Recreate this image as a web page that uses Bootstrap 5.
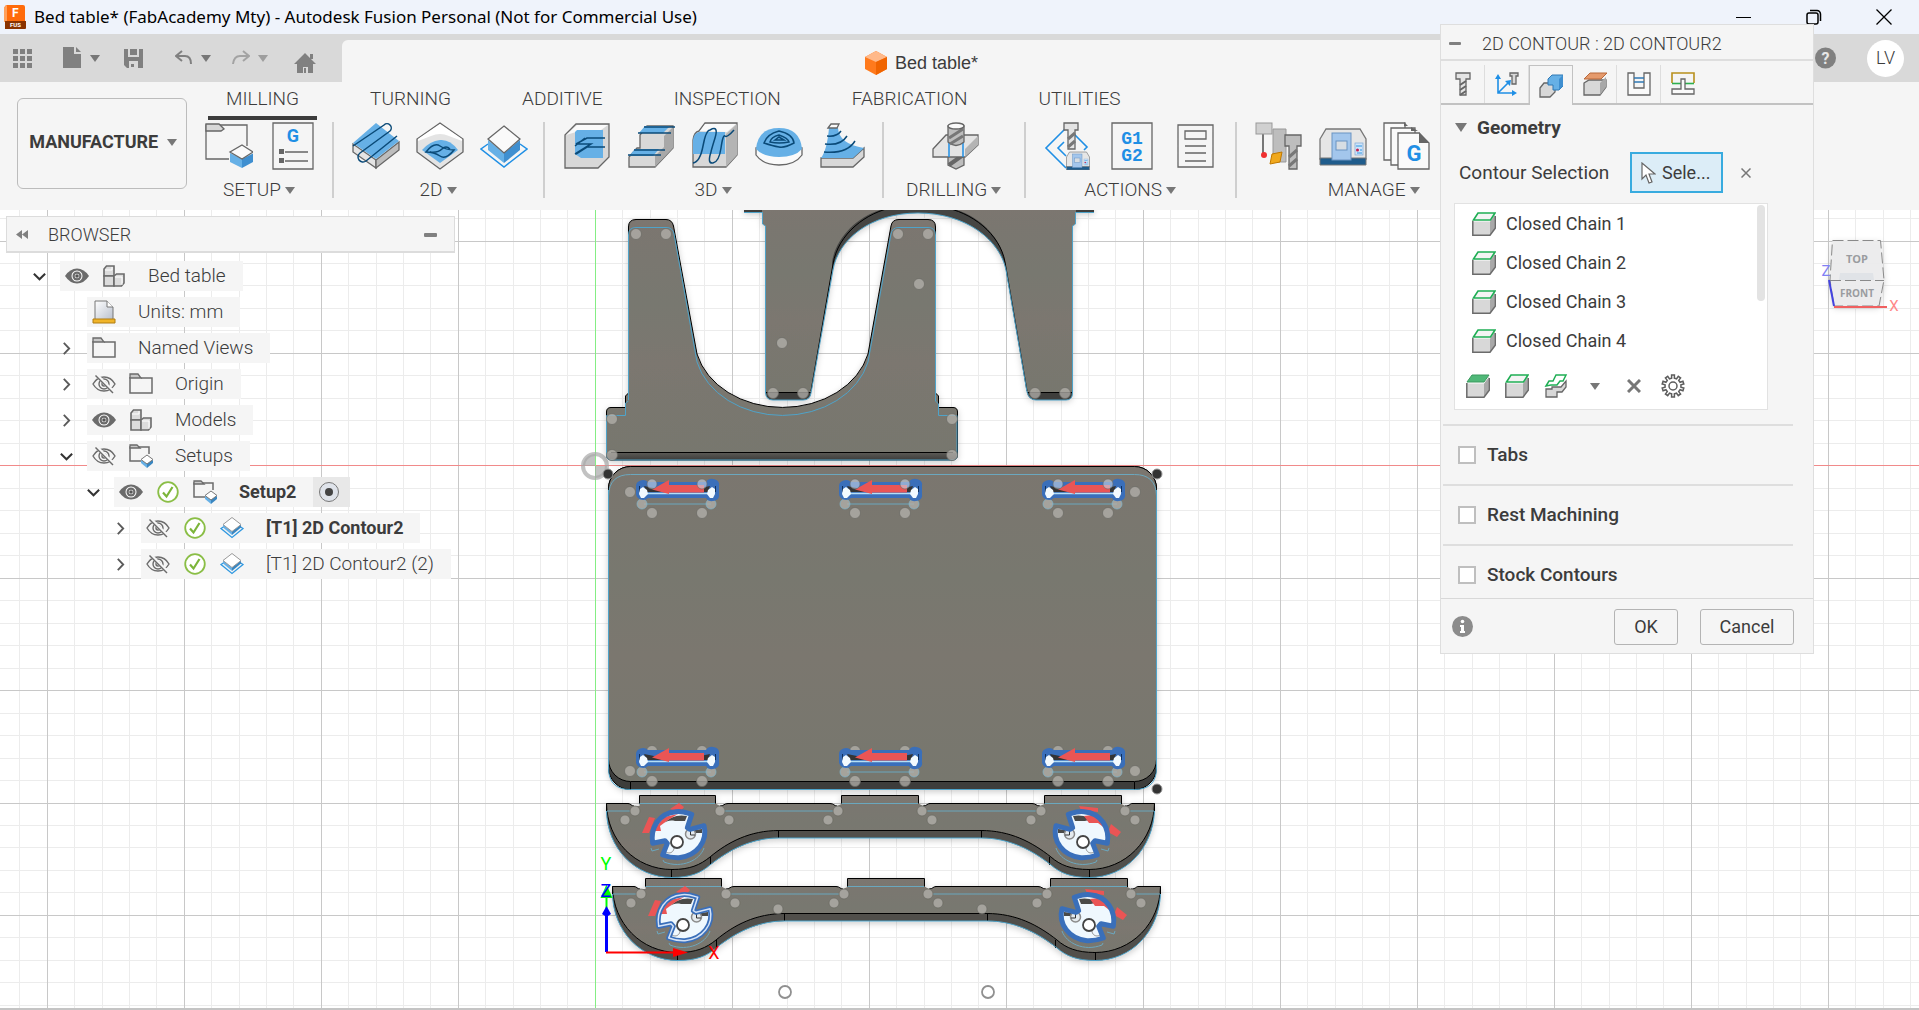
<!DOCTYPE html>
<html lang="en">
<head>
<meta charset="utf-8">
<meta name="viewport" content="width=device-width, initial-scale=1">
<title>Bed table* (FabAcademy Mty) - Autodesk Fusion Personal (Not for Commercial Use)</title>
<link href="https://cdn.jsdelivr.net/npm/bootstrap@5.3.0/dist/css/bootstrap.min.css" rel="stylesheet">
<style>
body{font-family:Roboto,"Liberation Sans",sans-serif;font-size:19px;line-height:24px;color:#3c3c3c;background:#fff}
svg{display:block;flex:none}
button{font:inherit;color:inherit;background:none;border:0;padding:0}
.light{font-weight:300}
.titlebar{height:34px;background:#eff3fb;color:#000;font-family:"Noto Sans","Open Sans",sans-serif;font-size:17px}
.win-btn{width:70px;height:34px;display:flex;align-items:center;justify-content:center}
.docbar{height:48px;background:#d9d9d9}
.quick{width:342px;padding-left:13px;color:#808080}
.q-file{margin-left:31px}.q-save{margin-left:24px}.q-undo{margin-left:32px}.q-redo{margin-left:21px;opacity:.6}.q-home{margin-left:26px;padding-top:10px}
.doc-tab{margin-top:6px;height:42px;background:#f5f5f5;border-radius:6px 0 0 0;flex:1;padding-top:4px}
.doc-tab a{color:#3c3c3c;font-family:"Liberation Sans",Arial,sans-serif;font-size:18px}
.account{width:418px;padding-right:15px}
.avatar{width:37px;height:37px;margin-left:31px;border-radius:50%;background:#fff;font-size:18px}
.ribbon{height:128px;background:#f5f5f5;color:#3c3c3c}
.workspace{width:170px;height:91px;margin:16px 0 0 17px;border:1px solid #bcbcbc;border-radius:6px;font-weight:700;font-size:18px;padding:0 0 4px 2px}
.rib-tabs{margin-left:21px;gap:35px;height:38px}
.rib-tabs a{padding:5px 18px 0;height:38px;border-bottom:4px solid transparent;color:#3c3c3c;text-decoration:none;font-weight:300}
.rib-tabs a.active{border-color:#3c3c3c;}
.tool-set{padding:0 7px 0 10px;height:76px;margin-top:2px;border-right:2px solid #cfcfcf}
.tool-set:last-child{border:0;width:274px}
.tool-set button{width:64px;display:flex;justify-content:center}
.set-name{font-weight:300;padding:8px 16px 0 12px;text-align:center}
.caret{display:inline-block;border:5px solid transparent;border-top:7px solid #777;border-bottom:0;vertical-align:middle;margin-left:4px}
.viewport3d{background:#fff;border-bottom:2px solid #c4c4c4;overflow:hidden;min-height:0}
.scene{position:absolute;inset:0;width:100%;height:100%}
.browser{position:absolute;left:6px;top:6px;width:449px}
.browser-head{height:37px;background:#f5f5f5;border:1px solid #dcdcdc;border-bottom-width:2px;padding:1px 17px 0 9px;font-size:18px}
.browser-title{margin-left:20px}
.tree-row{display:flex;height:30px;margin-bottom:6px;padding-left:12px}
.lv1{padding-left:39px}.lv2{padding-left:66px}.lv3{padding-left:93px}
.twist{width:42px;display:flex;align-items:center;justify-content:center}
.cells{display:flex;background:#f5f5f5;align-items:center}
.cells>svg{width:34px;height:24px;margin-right:3px}
.cells span{padding:0 17px 0 14px;font-weight:300}
.cells b{padding:0 17px 0 14px;font-weight:700;font-size:18px}
.cells .pick{background:#e8e8e8;width:37px;height:30px;display:flex;align-items:center;padding-left:5px}
.viewcube{position:absolute;right:16px;top:25px}
.dialog{position:absolute;top:24px;right:105px;width:374px;background:#f5f5f5;border:1px solid #dedede}
.dlg-head{height:36px;border-bottom:2px solid #dedede;padding:3px 0 0 8px;font-weight:300;font-size:18px}
.dlg-title{margin-left:21px}
.dlg-tabs{height:40px;margin-top:4px;border-bottom:2px solid #c2c2c2}
.dlg-tabs button{width:44px;height:38px;border-right:1px solid #ddd;display:flex;align-items:center;justify-content:center}
.dlg-tabs button.active{height:40px;background:#f5f5f5;border:1px solid #c2c2c2;border-bottom:0}
.geo{height:47px;padding:0 0 2px 14px;gap:10px;font-weight:700}
.pick-row{height:41px;padding-left:18px}
.sel-btn{width:93px;height:41px;background:#dcedf7;border:2px solid #38abdf;display:flex;align-items:center;gap:6px;padding-left:9px;font-size:18px}
.clear-btn{margin:0 62px 0 18px}
.chain-box{width:314px;height:207px;margin:10px 0 14px 13px;background:#fff;border:1px solid #e2e2e2;position:relative;font-size:18px}
.chain-box li{height:39px;display:flex;align-items:center;gap:10px;padding-left:17px}
.thumb{position:absolute;right:2px;top:1px;width:8px;height:96px;border-radius:4px;background:#e3e3e3}
.chain-tools{height:49px;padding:3px 0 0 3px}
.chain-tools button{width:39px;display:flex;justify-content:center}
.opt{height:60px;margin:0 20px 0 2px;padding-left:15px;border-top:2px solid #dedede;display:flex;align-items:center;gap:11px;font-weight:500}
.opt.last-opt{height:54px;padding-top:5px}
.opt input{appearance:none;width:18px;height:18px;background:#fff;border:2px solid #bfbfbf;margin:0}
.dlg-foot{height:55px;border-top:1px solid #d8d8d8;padding:1px 19px 0 11px;font-size:18px}
.dlg-foot button{height:36px;border:1px solid #b4b4b4;border-radius:3px}
.ok-btn{width:64px;margin-right:22px}.cancel-btn{width:94px}
.edge{fill:none;stroke:#000;stroke-width:1}
.hl{fill:none;stroke:#4fa3c9;stroke-width:1}
.inner{fill:none;stroke:#6ba7be;stroke-width:1}
.metal{fill:url(#steel)}
.dot{fill:#b4b2ac;fill-opacity:.75;stroke:#6a6964;stroke-opacity:.7;stroke-width:1}
.ring-dot{stroke:#7fb5cc}
.k{fill:none;stroke:#666;stroke-width:1.3}
.path{fill:none;stroke:#0a4a78;stroke-width:1.5}
.cyan{fill:#66b0e6}
.f-pale{fill:#fafafa}.f-lite{fill:#e4e4e4}.f-mid{fill:#d8d8d8}.f-dark{fill:#bdbdbd}
</style>
</head>
<body class="vh-100 overflow-hidden position-relative d-flex flex-column">

<svg width="0" height="0" class="position-absolute">
<defs>
<linearGradient id="steel" x1="0" y1="0" x2="0" y2="1"><stop offset="0" stop-color="#7b766f"/><stop offset=".35" stop-color="#78786f"/><stop offset=".6" stop-color="#7b776f"/><stop offset="1" stop-color="#77776e"/></linearGradient>
<linearGradient id="band" x1="0" y1="0" x2="0" y2="1"><stop offset="0" stop-color="#5a5955"/><stop offset="1" stop-color="#3c3c3a"/></linearGradient>
<linearGradient id="sheet" x1="0" y1="0" x2="1" y2="1"><stop offset="0" stop-color="#fff"/><stop offset="1" stop-color="#b8bfcc"/></linearGradient>
<filter id="shade" x="-20%" y="-20%" width="140%" height="150%"><feDropShadow dx="0" dy="2" stdDeviation="3" flood-color="#000" flood-opacity=".2"/></filter>
<symbol id="eye" viewBox="0 0 24 24"><path d="M0 12Q5 4.500 12 4.500T24 12Q19 19.500 12 19.500T0 12Z" fill="#6b6b6b"/><circle cx="12" cy="12" r="5.500" fill="#fff"/><circle cx="12" cy="12" r="4.500" fill="#6b6b6b"/><circle cx="12" cy="12" r="2.300" fill="#fff"/><circle cx="12" cy="12" r="1.800" fill="#555"/></symbol>
<symbol id="noeye" viewBox="0 0 24 24"><g fill="none" stroke="#6b6b6b" stroke-width="1.400"><path d="M1 12Q5 5 12 5T23 12Q19 19 12 19T1 12Z"/><circle cx="12" cy="12" r="5"/><circle cx="12" cy="12" r="2"/></g><path d="M4.500 3L22 20.500" stroke="#f5f5f5" stroke-width="3.500"/><path d="M3.500 3.500L21 21" stroke="#6b6b6b" stroke-width="1.500"/></symbol>
<symbol id="comp" viewBox="0 0 24 24"><g fill="#dcdcdc" stroke="#6b6b6b" stroke-width="1.600"><path d="M2 12V5L4.500 2H12V12Z"/><path d="M2 12H12V22H2Z"/><path d="M12 12L14.500 10H22V19L19.500 22H12Z"/></g><path d="M3 6h7V3M13 13h7v8" fill="none" stroke="#fff"/></symbol>
<symbol id="folder" viewBox="0 0 24 24"><path d="M1 5V21H23V6H12" fill="#f5f5f5" stroke="#6b6b6b" stroke-width="1.500"/><path d="M1 6V2H9L12 6Z" fill="#c8c8c8" stroke="#6b6b6b" stroke-width="1.300"/></symbol>
<symbol id="setup" viewBox="0 0 24 24"><path d="M12 17H1V3H20V10" fill="none" stroke="#6b6b6b" stroke-width="1.500"/><path d="M1 4V1H8L11 4Z" fill="#c8c8c8" stroke="#6b6b6b" stroke-width="1.300"/><path d="M12 16V19L18 24V19Z" fill="#66b0e6"/><path d="M24 16V19L18 24V19Z" fill="#3a86c0"/><path d="M18 11L24 15.500L18 20L12 15.500Z" fill="#fff" stroke="#777"/></symbol>
<symbol id="tick" viewBox="0 0 24 24"><circle cx="12" cy="12" r="9.800" fill="#fff" stroke="#8abe46" stroke-width="1.800"/><path d="M7 12.500L10.500 16.500L16.500 7" fill="none" stroke="#7cb53a" stroke-width="2.200"/></symbol>
<symbol id="contour" viewBox="0 0 24 24"><path d="M4 10.500L1 12.500L12 21.500L23 12.500L20 10.500" fill="none" stroke="#2f98e0" stroke-width="1.300"/><path d="M3 8.500V11.500L12 19V15Z" fill="#66b0e6"/><path d="M21 8.500V11.500L12 19V15Z" fill="#3a86c0"/><path d="M12 1.500L21 8.500L12 15.500L3 8.500Z" fill="#fff" stroke="#999"/></symbol>
<symbol id="open" viewBox="0 0 12 12"><path d="M.8 3.500L6 8.500L11.200 3.500" fill="none" stroke="#333" stroke-width="1.900"/></symbol>
<symbol id="shut" viewBox="0 0 12 12"><path d="M3.500 .8L8.500 6L3.500 11.200" fill="none" stroke="#5a5a5a" stroke-width="1.700"/></symbol>
<symbol id="block" viewBox="0 0 24 24"><path d="M1 9.500H18V23H1Z" fill="#d8d8d8"/><path d="M18 9.500L23 3V16L18 23Z" fill="#a8a8a8"/><path d="M.8 9V23.200H18L23.400 16V4" fill="none" stroke="#6b6b6b" stroke-width="1.500"/></symbol>
<symbol id="chain" viewBox="0 0 24 24"><use href="#block"/><path d="M1.500 8L6 1H23L18.500 8Z" fill="#f4f4f4" stroke="#1fae54" stroke-width="1.600"/></symbol>
<symbol id="machine" viewBox="0 0 48 40"><path d="M1 12L7 2H41L47 12V32H1Z" fill="#e6e6e6" stroke="#777" stroke-width="1.300"/><path d="M1 31H47V38H1Z" fill="#1f5c8c" stroke="#777"/><rect x="13" y="6" width="19" height="27" fill="#a3c6ec" stroke="#6a93c2"/><rect x="17" y="14" width="11" height="9" fill="#d7dde3" stroke="#6a93c2"/><rect x="36" y="16" width="8" height="12" fill="#cfe4fa" stroke="#7ba7d4" stroke-width=".7"/><circle cx="38.500" cy="23" r="1.500" fill="#c02050"/><path d="M37 19h6M41 23h2M38 26h5" stroke="#2f98e0"/></symbol>

<g id="slot">
<path d="M644 504H711" class="inner"/>
<circle class="dot" cx="652" cy="513" r="5.500"/><circle class="dot" cx="702" cy="513" r="5.500"/>
<circle class="dot ring-dot" cx="642" cy="504" r="5"/><circle class="dot ring-dot" cx="711" cy="504" r="5"/>
<path d="M636 486A7 6 0 0 1 648 482H706A7 6 0 0 1 719 486V494A7 6 0 0 1 706 498H648A7 6 0 0 1 636 494Z" fill="#3a6fba"/>
<path d="M644 486L654 488H700L710 486L708 492H647Z" fill="#343434"/>
<path d="M639.500 486V492M715.500 486V492" stroke="#10305c"/>
<path d="M646 493.500H709" stroke="#b5dff5" stroke-width="1.500"/>
<path d="M640 489L643 487L647 490L648 494L644 498H641L639 494Z" fill="#f2faff"/><path d="M715 489L712 487L708 490L707 494L710 498H713L715 494Z" fill="#f2faff"/>
<path d="M652 489.500L669 480V485H704V492.500H669V494Z" fill="#ea5555"/>
</g>
<g id="footbody">
<path d="M606.500 803.500H628C631 803.500 631 806 634 806H639.500V795.500H715.500V803.500L720 806C724 806 724 803.500 728 803.500H830C834 803.500 834 806 837 806L841.500 804V795.500H918.500V803.500L923 806C927 806 927 803.500 930 803.500H1032C1036 803.500 1036 806 1040 806L1044.500 804V795.500H1121.500V804L1125 806C1130 806 1130 803.500 1132 803.500H1154.500V811C1153 848 1126 877.500 1089 877.500C1071 877.500 1060 873 1051 865C1032 850 1009 838 981 838H779C751 838 729 850 710 865C701 873 690 877.500 672 877.500C635 877.500 607 848 606.500 811Z" class="metal"/>
<path d="M606.500 803.500C607 840 635 869.500 672 869.500C690 869.500 700 865 710 857C728 842 750 830.500 779 830.500H981C1010 830.500 1032 842 1051 857C1060 865 1071 869.500 1089 869.500C1126 869.500 1154 840 1154.500 803.500V811C1153 848 1126 877.500 1089 877.500C1071 877.500 1060 873 1051 865C1032 850 1009 838 981 838H779C751 838 729 850 710 865C701 873 690 877.500 672 877.500C635 877.500 607 848 606.500 811Z" fill="#51504c"/>
<path class="edge" d="M606.500 811V803.500H628C631 803.500 631 806 634 806M639.500 804V795.500H715.500V803.500M720 806C724 806 724 803.500 728 803.500H830C834 803.500 834 806 837 806M841.500 804V795.500H918.500V803.500M923 806C927 806 927 803.500 930 803.500H1032C1036 803.500 1036 806 1040 806M1044.500 804V795.500H1121.500V804M1125 806C1130 806 1130 803.500 1132 803.500H1154.500V811"/>
<path class="edge" d="M606.500 803.500C607 840 635 869.500 672 869.500C690 869.500 700 865 710 857C728 842 750 830.500 779 830.500H981C1010 830.500 1032 842 1051 857C1060 865 1071 869.500 1089 869.500C1126 869.500 1154 840 1154.500 803.500M671.500 869V877M710.500 857V865M778.500 830V838M981.500 830V838M1049.500 857V865M1089.500 869V877"/>
<path class="hl" d="M606.500 811C607 848 635 877.500 672 877.500C690 877.500 701 873 710 865C729 850 751 838 779 838H981C1009 838 1032 850 1051 865C1060 873 1071 877.500 1089 877.500C1126 877.500 1153 848 1154.500 811"/>
<path class="inner" d="M639.500 803.500H715M841.500 803.500H918M1044.500 803.500H1121M607 811H630M724 811H833M927 811H1036M1130 811H1154"/>
<g class="dot"><circle cx="635" cy="811" r="5"/><circle cx="720" cy="811" r="5"/><circle cx="838" cy="811" r="5"/><circle cx="922" cy="811" r="5"/><circle cx="1041" cy="811" r="5"/><circle cx="1125" cy="811" r="5"/><circle cx="625" cy="820" r="5"/><circle cx="729" cy="820" r="5"/><circle cx="828" cy="820" r="5"/><circle cx="932" cy="820" r="5"/><circle cx="1031" cy="820" r="5"/><circle cx="1135" cy="820" r="5"/></g>
</g>
<g id="hub">
<path class="inner" d="M651 848L652 851L659 849M663 860L664 862C682 869 700 860 704 848"/>
<path d="M652.700 843.300C650 828 659 813 676 811.700C684 811 687 813 691.700 814.300L687.300 827.700L690 829.300L704 825.700C708 841 697 856 679 857.700C672 858 668 857 662.700 855L667.300 843.300L665 840.700Z" fill="#eff8fe"/>
<path d="M664 823C670 817 678 814 687 816L685 821H675C670 820 667 821 664 823ZM694 830L702 829V833H694Z" fill="#4a4a48"/>
<circle cx="690.500" cy="834" r="5" fill="#e4eaee" stroke="#8a8a8a" stroke-width="1.500"/><path d="M690.500 830V835H695" fill="none" stroke="#333"/>
<circle cx="669" cy="848" r="5" fill="none" stroke="#999"/>
</g>
<path id="ring" d="M652.700 843.300C650 828 659 813 676 811.700C684 811 687 813 691.700 814.300L687.300 827.700L690 829.300L704 825.700C708 841 697 856 679 857.700C672 858 668 857 662.700 855L667.300 843.300L665 840.700Z" fill="none" stroke-linejoin="round"/>
<g id="redl" fill="#ea5555"><path d="M642 833L649 817L655 818L649 833ZM670 809L679 803L684 807L680 812ZM653 831L657 826L664 817L678 814L668 820L660 826L661 831Z"/></g>
<g id="redr" fill="#ea5555"><path d="M1079 806L1098 808V812L1081 810ZM1084 816L1092 815L1105 822L1110 832L1098 823L1089 823ZM1111 824L1121 832L1117 837L1108 832Z"/></g>
</defs>
</svg>

<header class="titlebar d-flex align-items-center ps-1 flex-shrink-0">
  <svg width="22" height="26" viewBox="0 0 22 26"><rect x="1" y="1" width="20" height="24" rx="2" fill="#ff6b0b"/><path d="M0 3L3 1V18H0Z" fill="#ffa05c"/><path d="M1 17H22V24a1 1 0 0 1-1 1H1Z" fill="#8a3300"/><text x="8" y="13" font-size="12" font-weight="700" fill="#fff" font-family="Roboto">F</text><text x="6" y="23" font-size="6" font-weight="700" fill="#fff" font-family="Roboto">FUS</text></svg>
  <span class="ms-2 me-auto">Bed table* (FabAcademy Mty) - Autodesk Fusion Personal (Not for Commercial Use)</span>
  <button class="win-btn" aria-label="Minimize"><svg width="16" height="16"><path d="M0 8.500H15" stroke="#000"/></svg></button>
  <button class="win-btn" aria-label="Restore"><svg width="16" height="16" fill="none" stroke="#000" stroke-width="1.500"><rect x="1" y="4" width="11" height="11" rx="2"/><path d="M4 1.500H11A3.500 3.500 0 0 1 14.500 5V12"/></svg></button>
  <button class="win-btn" aria-label="Close"><svg width="16" height="16"><path d="M.5 .5L15.500 15.500M15.500 .5L.5 15.500" stroke="#000" stroke-width="1.300"/></svg></button>
</header>

<div class="docbar d-flex flex-shrink-0">
  <nav class="quick d-flex align-items-center" aria-label="Quick access">
    <button aria-label="Data panel"><svg width="19" height="19" fill="#808080"><path d="M0 0h5v5H0zM7 0h5v5H7zM14 0h5v5h-5zM0 7h5v5H0zM7 7h5v5H7zM14 7h5v5h-5zM0 14h5v5H0zM7 14h5v5H7zM14 14h5v5h-5z"/></svg></button>
    <button class="q-file d-flex align-items-center" aria-label="File"><svg width="19" height="22" fill="#808080"><path d="M0 0H11V7H18V21H0Z"/><path d="M13 0L18 5H13Z"/></svg><i class="caret ms-2"></i></button>
    <button class="q-save" aria-label="Save"><svg width="19" height="19" fill="#808080"><path fill-rule="evenodd" d="M0 0H19V19H3L0 16ZM4 0V8H15V0H13V6H6V0ZM5 12V19H14V12ZM7 15h3v3H7z"/></svg></button>
    <button class="q-undo d-flex align-items-center" aria-label="Undo"><svg width="18" height="16" fill="none" stroke="#808080" stroke-width="2"><path d="M7 1L1 6L7 11M1 6H10Q16 6 16 14"/></svg><i class="caret ms-2"></i></button>
    <button class="q-redo d-flex align-items-center" aria-label="Redo"><svg width="18" height="16" fill="none" stroke="#808080" stroke-width="2"><path d="M11 1L17 6L11 11M17 6H8Q2 6 1 14"/></svg><i class="caret ms-2"></i></button>
    <button class="q-home" aria-label="Home"><svg width="22" height="21" fill="#808080"><path d="M11 0L22 11H19V20H14V14H9V20H3V11H0ZM16 1h3v5h-3z"/><path d="M10 15h2v5h-2z"/></svg></button>
  </nav>
  <div class="doc-tab d-flex align-items-center justify-content-center"><svg width="22" height="24" viewBox="0 0 22 24"><path d="M11 0L22 6V18L11 24L0 18V6Z" fill="#ff7a1c"/><path d="M11 0L22 6L11 11L0 6Z" fill="#ffb98a"/><path d="M22 6V18L11 24V11Z" fill="#f06400"/></svg><a href="#" class="ms-2 text-decoration-none">Bed table*</a></div>
  <div class="account d-flex align-items-center justify-content-end">
    <button aria-label="Help"><svg width="21" height="22"><circle cx="10.500" cy="11" r="10.500" fill="#808080"/><text x="10.500" y="17" text-anchor="middle" font-size="16" font-weight="700" fill="#e6e6e6">?</text></svg></button>
    <button class="avatar light">LV</button>
  </div>
</div>

<div class="ribbon d-flex flex-shrink-0">
  <button class="workspace flex-shrink-0">MANUFACTURE <i class="caret"></i></button>
  <div>
    <nav class="rib-tabs d-flex"><a class="active" href="#">MILLING</a><a href="#">TURNING</a><a href="#">ADDITIVE</a><a href="#">INSPECTION</a><a href="#">FABRICATION</a><a href="#">UTILITIES</a></nav>
    <div class="d-flex">
      <section class="tool-set">
        <div class="d-flex">
          <button aria-label="New setup"><svg width="48" height="48"><path d="M24 37H1V3H42V24" class="k"/><path d="M1 9V2H14L19 7L16 9Z" class="k f-mid"/><path d="M25 31L37 37V46L25 40Z" class="cyan"/><path d="M49 31L37 37V46L48 40Z" fill="#3f8fd0"/><path d="M37 23L48 30L37 37L25 30Z" class="k f-pale"/></svg></button>
          <button aria-label="NC program"><svg width="42" height="48"><path class="k" d="M1 1H41V47H1Z"/><text x="21" y="20" text-anchor="middle" font-size="18" font-weight="700" fill="#1f8fe5">G</text><path d="M7 27h5v5H7zM7 36h5v5H7z" fill="#666"/><path class="k" d="M13 30H36M13 39H36"/></svg></button>
        </div><div class="set-name">SETUP<i class="caret"></i></div>
      </section>
      <section class="tool-set">
        <div class="d-flex">
          <button aria-label="2D face"><svg width="48" height="48"><path d="M1 22L24 38V46L1 30Z" class="k f-lite"/><path d="M47 20L24 38V46L47 28Z" class="k f-dark"/><path class="cyan" d="M24 1L47 19L24 37L1 21Z"/><path class="path" d="M1 24L32 3A4 4 0 0 1 38 9L8 31A4 4 0 0 0 14 39L45 14"/></svg></button>
          <button aria-label="2D pocket"><svg width="48" height="48"><path class="k f-lite" d="M24 1L47 17V30L24 47L1 30V17Z"/><path d="M24 2L46 17V19L33 14Q24 10 15 14L2 19V17Z" fill="#fff"/><path class="cyan" d="M6 28Q14 19 24 18T42 28L24 41Z"/><path class="path" d="M10 30Q18 20 24 24T38 28Q30 38 24 34T10 30ZM14 30Q22 31 26 27T34 27"/></svg></button>
          <button aria-label="2D contour"><svg width="48" height="48"><path d="M8 22L1 27L24 45L47 27L40 22" fill="none" stroke="#1f8fe5" stroke-width="1.500"/><path class="cyan" d="M8 18L24 31V41L8 28Z"/><path fill="#3f8fd0" d="M40 18L24 31V41L40 28Z"/><path class="k f-pale" d="M24 4L40 17L24 31L8 17Z"/></svg></button>
        </div><div class="set-name">2D<i class="caret"></i></div>
      </section>
      <section class="tool-set">
        <div class="d-flex">
          <button aria-label="Adaptive clearing"><svg width="48" height="48"><path class="k f-mid" d="M2 13L13 2H46V35L35 46H2Z"/><path d="M3 13L14 3H45L38 8H20Z" fill="#fafafa"/><path class="cyan" d="M14 8H40V36H18L12 32V10Z"/><path class="path" d="M42 16H24L13 22H28L12 32M42 25H24L13 32M22 16L12 24"/></svg></button>
          <button aria-label="Steps"><svg width="48" height="48"><path class="k f-mid" d="M2 45V35L10 26H13V13L20 4H46V26L28 45Z"/><path d="M46 5V26L28 45V34L37 25V14Z" fill="#a8a8a8"/><path class="cyan" d="M18 4H43L36 11H12ZM8 27H32L26 34H2Z"/><path class="path" d="M17 5H48M11 11H44M7 28H38M1 33H34"/></svg></button>
          <button aria-label="Parallel"><svg width="48" height="48"><path class="k f-mid" d="M2 45V18Q3 10 8 9L14 1H46V33L35 45Z"/><path d="M9 9L14 2H45L36 10Z" fill="#fafafa"/><path d="M46 2V33L35 45V12Z" fill="#b4b4b4"/><path class="cyan" d="M2 32V18Q3 11 8 10H34V32Z"/><path class="path" d="M2 41Q9 40 12 24T19 8Q28 3 24 16T20 30Q16 42 22 41T30 26T34 14T43 8"/></svg></button>
          <button aria-label="Scallop"><svg width="48" height="48"><path class="k f-pale" d="M1 26V33Q8 43 24 43T47 33V26Z"/><path class="cyan" d="M1 27Q3 6 24 6T47 27Q40 35 24 35T1 27Z"/><path class="path" d="M24 9Q38 12 39 21Q30 26 24 25T9 21Q12 12 24 9ZM24 13Q33 16 34 20Q24 22 15 20Q16 15 24 13ZM20 18L24 15L29 18Z"/></svg></button>
          <button aria-label="Ramp"><svg width="48" height="48"><path class="k f-mid" d="M2 36H34L45 26V35L34 45H2Z"/><path class="cyan" d="M10 6H19Q20 22 45 26L34 36H2Q8 28 10 6Z"/><path class="k f-pale" d="M9 6L12 2H20L18 6Z"/><path class="path" d="M8 14Q18 15 22 9M6 22Q22 24 28 14M5 30Q28 32 36 19"/></svg></button>
        </div><div class="set-name">3D<i class="caret"></i></div>
      </section>
      <section class="tool-set">
        <div class="d-flex justify-content-center">
          <button aria-label="Drill"><svg width="48" height="48"><path d="M16 30H32V43L24 47L16 43Z" class="k f-dark"/><path d="M17 43L31 33" stroke="#666" stroke-width="4"/><path class="k f-lite" d="M1 27L14 13H46V23L33 35H1Z"/><path d="M46 14V23L33 35V27Z" fill="#b4b4b4"/><path d="M17 20V35M31 20V35" stroke="#1f8fe5" stroke-width="1.500"/><path class="k f-dark" d="M16 4H32V20Q24 27 16 20Z"/><path d="M17 16L31 7M18 22L31 14" stroke="#777" stroke-width="3"/><ellipse cx="24" cy="4" rx="8" ry="3" class="k f-pale"/></svg></button>
        </div><div class="set-name">DRILLING<i class="caret"></i></div>
      </section>
      <section class="tool-set">
        <div class="d-flex">
          <button aria-label="Simulate"><svg width="48" height="48"><path d="M22 6L2 26L22 46M20 20L14 26L22 34M30 12L43 25L40 28" fill="none" stroke="#1f8fe5" stroke-width="1.600"/><path class="k f-lite" d="M20 1H34V8H31V27H24V8H20Z"/><path d="M24 17L31 11M24 25L31 19" stroke="#777" stroke-width="3"/><use href="#machine" x="22" y="29" width="24" height="20"/></svg></button>
          <button aria-label="Post process"><svg width="42" height="48"><path class="k" d="M1 1H41V47H1Z"/><g font-family="Liberation Mono" font-size="18" font-weight="700" fill="#1f8fe5" text-anchor="middle"><text x="21" y="22">G1</text><text x="21" y="39">G2</text></g></svg></button>
          <button aria-label="Setup sheet"><svg width="38" height="48"><path class="k" d="M1 3H36V45H1ZM8 9H29V17H8ZM8 24H29M8 31H29M8 39H29"/></svg></button>
        </div><div class="set-name">ACTIONS<i class="caret"></i></div>
      </section>
      <section class="tool-set">
        <div class="d-flex">
          <button aria-label="Tool library"><svg width="48" height="48"><path class="f-dark" stroke="#999" d="M18 7H31V40H18Z"/><path d="M8 12V32" stroke="#777" stroke-width="2"/><rect x="1" y="1" width="16" height="11" fill="#d0d0d0" stroke="#999"/><circle cx="9" cy="33" r="3" fill="#f03030"/><path d="M17 32L27 30L25 40L15 42Z" fill="#f0a81c" stroke="#c07800"/><path class="k f-dark" d="M30 13H46V24H42V47H34V24H30Z"/><path d="M34 35L42 28M34 44L42 37" stroke="#777" stroke-width="3"/></svg></button>
          <button aria-label="Machine library"><svg width="48" height="48"><use href="#machine" y="5" width="48" height="40"/></svg></button>
          <button aria-label="Templates"><svg width="48" height="48"><path class="k f-pale" d="M1 1H22V38H1Z"/><path class="k f-pale" d="M8 6H32V43H8Z"/><path class="k f-pale" d="M15 11H36L46 21V47H15Z"/><path d="M21 0L25 4H21ZM28 5L35 9H28ZM36 10L46 21H36Z" fill="#666"/><text x="31" y="39" text-anchor="middle" font-size="22" font-weight="700" fill="#1f8fe5">G</text></svg></button>
        </div><div class="set-name">MANAGE<i class="caret"></i></div>
      </section>
    </div>
  </div>
</div>

<main class="viewport3d position-relative flex-grow-1">
  <svg class="scene" aria-label="Model view">
    <g transform="translate(0 -210)">
      <g shape-rendering="crispEdges" fill="none"><path id="gridMinor" stroke="#ececec"/><path id="gridMajor" stroke="#c8c8c8"/><path d="M0 465.500H6000" stroke="#f18a8a"/><path d="M595.500 210V4000" stroke="#84ee84"/></g>
      <circle cx="595" cy="466" r="12" fill="none" stroke="#a8a8a8" stroke-width="4" opacity=".7"/><path d="M595 466H607A12 12 0 0 1 595 478ZM595 466H583A12 12 0 0 1 595 454Z" fill="#a8a8a8" opacity=".7"/>

      <!-- rear leg -->
      <g filter="url(#shade)">
      <path d="M744 205V212.500H762.500V224L765.500 226V393Q766 400 773 400H803Q810 400 811 393L833 270C838 240 870 213 918 213S1000 240 1006 270L1027 392Q1029 400 1036 400H1066Q1072.500 400 1072.500 393V226L1075.500 224V212.500H1094V205Z" class="metal"/></g>
      <path d="M833 270L832 262C836 236 862 210 895 207H942C975 210 1001 236 1005 262L1006 270C1000 240 966 213 918 213S838 240 833 270Z" fill="#454543"/>
      <path class="edge" d="M811 391L833 264C838 234 866 212 895 207M942 207C972 212 1000 234 1005 262L1027 391M766 392.500H811M1027 392.500H1072"/>
      <path d="M766 393H811Q810 400 803 400H773Q766 400 766 393ZM1027 393H1072.500Q1072 400 1066 400H1036Q1029 400 1027 393ZM744 210H762V212H744ZM1076 210H1094V212H1076Z" fill="#3e3e3c"/>
      <path class="hl" d="M744 212.500H762.500V224L765.500 226V393Q766 400 773 400H803Q810 400 811 393L833 270C838 240 870 213 918 213S1000 240 1006 270L1027 392Q1029 400 1036 400H1066Q1072.500 400 1072.500 393V226L1075.500 224V212.500H1094"/>
      <g class="dot"><circle cx="773" cy="393" r="5.500"/><circle cx="803" cy="393" r="5.500"/><circle cx="1035" cy="393" r="5.500"/><circle cx="1065" cy="393" r="5.500"/><circle cx="782" cy="343" r="5.500"/></g>

      <!-- front leg -->
      <g filter="url(#shade)"><path class="metal" stroke="#000" d="M628.500 227Q628.500 219.500 636 219.500H666Q672 219.500 673.500 226L697 354A88 70 0 0 0 868 354L891 226Q892 219.500 899 219.500H928Q935.500 219.500 935.500 227V393L938.500 396V407.500H953Q957.500 407.500 957.500 412V455Q957.500 460 952 460H612Q606.500 460 606.500 455V412Q606.500 407.500 611 407.500H625.500V396L628.500 393Z"/></g>
      <path d="M607 453H957V455Q957 460 952 460H612Q607 460 607 455Z" fill="url(#band)"/><path class="edge" d="M611 452.500H953"/>
      <path class="hl" d="M628.500 400V235Q628.500 227.500 636 227.500H666Q673 227.500 674 234L697 362A88 70 0 0 0 868 362L891 234Q892 227.500 899 227.500H928Q935.500 227.500 935.500 235V401L938.500 404V415.500H957V455Q957.500 460 952 460H612Q606.500 460 606.500 455V415.500H625.500V403L628.500 401"/>
      <g class="dot"><circle cx="636" cy="234" r="5.500"/><circle cx="666" cy="234" r="5.500"/><circle cx="898" cy="234" r="5.500"/><circle cx="928" cy="234" r="5.500"/><circle cx="919" cy="284" r="5.500"/><circle cx="612" cy="419" r="5.500"/><circle cx="952" cy="419" r="5.500"/><circle cx="612" cy="455" r="5.500"/><circle cx="952" cy="455" r="5.500"/></g>

      <!-- table top -->
      <g filter="url(#shade)"><rect x="608.500" y="466.500" width="548" height="323" rx="22" fill="url(#band)" stroke="#000"/></g>
      <rect x="608.500" y="466.500" width="548" height="315" rx="22" class="metal" stroke="#000"/>
      <path class="edge" d="M630.500 782V789M1134.500 782V789"/><path class="inner" d="M608.500 496Q609 474.500 630.500 474.500H1134.500Q1156 474.500 1156.500 496"/>
      <path class="hl" d="M608.500 490V768Q608.500 789.500 630.500 789.500H1134.500Q1156.500 789.500 1156.500 768V490"/>
      <g fill="#333" stroke="#999"><circle cx="608" cy="474" r="5"/><circle cx="1157" cy="474" r="5"/></g>
      <g class="dot"><circle cx="630" cy="492" r="5.500"/><circle cx="1135" cy="492" r="5.500"/><circle cx="630" cy="771" r="5.500"/><circle cx="1135" cy="771" r="5.500"/></g>
      <g class="dot"><circle cx="652" cy="751" r="5.500"/><circle cx="702" cy="751" r="5.500"/><circle cx="855" cy="751" r="5.500"/><circle cx="905" cy="751" r="5.500"/><circle cx="1058" cy="751" r="5.500"/><circle cx="1108" cy="751" r="5.500"/></g>
      <use href="#slot"/><use href="#slot" x="203"/><use href="#slot" x="406"/><use href="#slot" y="268"/><use href="#slot" x="203" y="268"/><use href="#slot" x="406" y="268"/>
      <g fill="#c8d4e4" fill-opacity=".6" stroke="#6a6964" stroke-opacity=".6"><circle cx="652" cy="484" r="5"/><circle cx="702" cy="484" r="5"/><circle cx="855" cy="484" r="5"/><circle cx="905" cy="484" r="5"/><circle cx="1058" cy="484" r="5"/><circle cx="1108" cy="484" r="5"/></g>
      <circle cx="1157" cy="789" r="5" fill="#333" stroke="#999"/>

      <!-- feet -->
      <g filter="url(#shade)"><use href="#footbody"/><use href="#footbody" x="6" y="83"/></g>
      <g class="dot"><circle cx="778" cy="909" r="5"/><circle cx="982" cy="909" r="5"/></g>
      <g id="hubs"><use href="#hub"/><use href="#redl"/><use href="#hub" transform="translate(1760) scale(-1 1)"/><use href="#redr"/></g>
      <use href="#hubs" x="6" y="83"/>
      <g stroke="#3a6fba" stroke-width="5"><use href="#ring"/><use href="#ring" transform="translate(1760) scale(-1 1)"/><use href="#ring" x="6" y="83"/><use href="#ring" transform="translate(1766 83) scale(-1 1)"/></g>
      <use href="#ring" x="6" y="83" stroke="#d4e2f6" stroke-width="1.500"/>
      <g fill="#fff" stroke="#444" stroke-width="1.800"><circle cx="677" cy="842" r="6"/><circle cx="1083" cy="842" r="6"/><circle cx="683" cy="925" r="6"/><circle cx="1089" cy="925" r="6"/></g>
      <g fill="#fff" stroke="#909090" stroke-width="1.800"><circle cx="785" cy="992" r="6"/><circle cx="988" cy="992" r="6"/></g>

      <!-- axis triad -->
      <path d="M606.500 893V912M602 897L606.500 887L611 897Z" stroke="#0f0" stroke-width="2" fill="#0f0"/>
      <path d="M606.500 952V912" stroke="#00f" stroke-width="3"/><path d="M606.500 906L611 914L606.500 917L602 914Z" fill="#00f"/>
      <path d="M606 952.500H676" stroke="#f00" stroke-width="2"/><path d="M673 948L688 952.500L673 957Z" fill="#f00"/>
      <g text-anchor="middle" font-family="Roboto" font-size="18"><text x="606" y="870" fill="#0f0">Y</text><text x="606" y="897" fill="#00f">Z</text><text x="714" y="959" fill="#f00">X</text></g>
    </g>
  </svg>

  <aside class="browser">
    <div class="browser-head d-flex align-items-center light mb-2"><svg width="12" height="10" fill="#808080"><path d="M6 0V9L0 4.500ZM12 0V9L6 4.500Z"/></svg><span class="browser-title me-auto">BROWSER</span><svg width="13" height="4"><rect width="13" height="4" rx="1" fill="#808080"/></svg></div>
    <div class="tree">
      <div class="tree-row"><button class="twist" aria-label="Collapse"><svg width="13" height="13"><use href="#open"/></svg></button><div class="cells"><svg><use href="#eye"/></svg><svg><use href="#comp"/></svg><span>Bed table</span></div></div>
      <div class="tree-row lv1"><div class="twist"></div><div class="cells"><svg viewBox="0 0 24 24"><path d="M3 1H15L21 7V20H3Z" fill="url(#sheet)" stroke="#777"/><path d="M15 1V7H21" fill="#fff" stroke="#777"/><path d="M1 19H23V23H1Z" fill="#f0b429" stroke="#b07c10"/></svg><span>Units: mm</span></div></div>
      <div class="tree-row lv1"><button class="twist" aria-label="Expand"><svg width="13" height="13"><use href="#shut"/></svg></button><div class="cells"><svg><use href="#folder"/></svg><span>Named Views</span></div></div>
      <div class="tree-row lv1"><button class="twist" aria-label="Expand"><svg width="13" height="13"><use href="#shut"/></svg></button><div class="cells"><svg><use href="#noeye"/></svg><svg><use href="#folder"/></svg><span>Origin</span></div></div>
      <div class="tree-row lv1"><button class="twist" aria-label="Expand"><svg width="13" height="13"><use href="#shut"/></svg></button><div class="cells"><svg><use href="#eye"/></svg><svg><use href="#comp"/></svg><span>Models</span></div></div>
      <div class="tree-row lv1"><button class="twist" aria-label="Collapse"><svg width="13" height="13"><use href="#open"/></svg></button><div class="cells"><svg><use href="#noeye"/></svg><svg><use href="#setup"/></svg><span>Setups</span></div></div>
      <div class="tree-row lv2"><button class="twist" aria-label="Collapse"><svg width="13" height="13"><use href="#open"/></svg></button><div class="cells"><svg><use href="#eye"/></svg><svg><use href="#tick"/></svg><svg><use href="#setup"/></svg><b>Setup2</b><button class="pick" aria-label="Activate setup"><svg width="22" height="22"><circle cx="11" cy="11" r="9.500" fill="#dfe3ea" stroke="#777"/><circle cx="11" cy="11" r="4" fill="#444"/></svg></button></div></div>
      <div class="tree-row lv3"><button class="twist" aria-label="Expand"><svg width="13" height="13"><use href="#shut"/></svg></button><div class="cells"><svg><use href="#noeye"/></svg><svg><use href="#tick"/></svg><svg><use href="#contour"/></svg><b>[T1] 2D Contour2</b></div></div>
      <div class="tree-row lv3"><button class="twist" aria-label="Expand"><svg width="13" height="13"><use href="#shut"/></svg></button><div class="cells"><svg><use href="#noeye"/></svg><svg><use href="#tick"/></svg><svg><use href="#contour"/></svg><span>[T1] 2D Contour2 (2)</span></div></div>
    </div>
  </aside>

  <svg class="viewcube" width="85" height="84" font-family="'Open Sans',sans-serif" font-weight="700" text-anchor="middle">
    <g filter="url(#shade)"><path d="M14.500 5.500H62.500L66 45L61 71H16L12 45Z" fill="#ececed" fill-opacity=".95"/></g><path d="M22 38H55L56 45H21Z" fill="#e0e3e7"/>
    <path d="M14.500 5.500H62.500L66 45L61 71H16L12 45ZM12 45.500H66" fill="none" stroke="#8a8a8a" stroke-dasharray="11 4"/>
    <text x="39" y="28" font-size="11" fill="#9a9ca0">TOP</text><text x="39" y="62" font-size="10" fill="#9a9ca0">FRONT</text>
    <path d="M11 45L16 71" stroke="#4444e0" stroke-width="2"/><path d="M16 72H69" stroke="#f06060" stroke-width="2"/>
    <g font-family="Roboto" font-weight="400" font-size="15"><text x="8" y="41" fill="#8080f4">Z</text><text x="76" y="76" fill="#f88">X</text></g>
  </svg>
</main>

<form class="dialog" onsubmit="return false">
  <div class="dlg-head d-flex align-items-center"><svg width="12" height="4"><rect width="12" height="3" rx="1" fill="#808080"/></svg><span class="dlg-title">2D CONTOUR : 2D CONTOUR2</span></div>
  <div class="dlg-tabs d-flex">
    <button type="button" aria-label="Tool"><svg width="24" height="24"><path class="k f-lite" d="M5 1H19V7H15V23H9V7H5Z"/><path d="M9 13L15 9M9 18L15 14M9 23L15 19" stroke="#666" stroke-width="2"/></svg></button>
    <button type="button" aria-label="Feeds"><svg width="24" height="24"><path d="M3 4V21H20M3 21L14 10" fill="none" stroke="#1f8fe5" stroke-width="1.600"/><path d="M0 7L3 2L6 7ZM17 18L22 21L17 24ZM10 9L16 8L15 14Z" fill="#1f8fe5"/><path class="k f-mid" d="M15 1H23V4H21V12H17V4H15Z"/></svg></button>
    <button type="button" class="active" aria-label="Geometry"><svg width="24" height="24"><path class="k f-mid" d="M1 14L5 9H16V18L11 23H1Z"/><path d="M9 5L13 1H24V12L20 16H14V11H9Z" fill="#66b0e6" stroke="#2f78b4"/><path d="M24 1V12L20 16V5Z" fill="#3f8fd0"/></svg></button>
    <button type="button" aria-label="Heights"><svg width="24" height="24"><path class="k f-mid" d="M1 11L6 8H23V15L17 23H1Z"/><path d="M17 11L23 5V15L17 23Z" fill="#a8a8a8"/><path d="M1 7L7 1H24L18 7Z" fill="#e59a6c" stroke="#b8683a"/></svg></button>
    <button type="button" aria-label="Passes"><svg width="24" height="24"><path class="k f-pale" d="M1 1H7V16H17V1H23V23H1Z"/><path d="M7 6H17M7 10H17" stroke="#2f78b4" stroke-width="1.500"/></svg></button>
    <button type="button" class="border-0" aria-label="Linking"><svg width="24" height="24"><path d="M1 11V1H23V11" fill="none" stroke="#b8901c" stroke-width="1.600"/><path d="M1 11.500H23" stroke="#2eae4e" stroke-width="1.600"/><path class="k f-pale" d="M10 7H14V17H23V22H1V17H10Z"/></svg></button>
  </div>
  <div class="geo d-flex align-items-center"><svg width="12" height="9"><path d="M0 0H12L6 9Z" fill="#777"/></svg><span>Geometry</span></div>
  <div class="pick-row d-flex align-items-center"><label for="sel">Contour Selection</label><button id="sel" type="button" class="sel-btn ms-auto"><svg width="15" height="22"><path d="M1 1V17L5 13L8 21L11 20L8 12H14Z" fill="#fff" stroke="#666" stroke-width="1.200"/></svg>Sele...</button><button type="button" class="clear-btn" aria-label="Clear selection"><svg width="10" height="10"><path d="M.5 .5L9.500 9.500M9.500 .5L.5 9.500" stroke="#777" stroke-width="1.500"/></svg></button></div>
  <div class="chain-box">
    <ul class="list-unstyled m-0">
      <li><svg width="24" height="24"><use href="#chain"/></svg>Closed Chain 1</li>
      <li><svg width="24" height="24"><use href="#chain"/></svg>Closed Chain 2</li>
      <li><svg width="24" height="24"><use href="#chain"/></svg>Closed Chain 3</li>
      <li><svg width="24" height="24"><use href="#chain"/></svg>Closed Chain 4</li>
    </ul>
    <div class="thumb"></div>
    <div class="chain-tools d-flex align-items-center">
      <button type="button" aria-label="Face"><svg width="24" height="24"><use href="#block"/><path d="M1 8L6 1H23L18 8Z" fill="#50b878" stroke="#3a9a5e"/></svg></button>
      <button type="button" aria-label="Closed chain"><svg width="24" height="24"><use href="#chain"/></svg></button>
      <button type="button" aria-label="Pocket"><svg width="24" height="24"><path class="k f-mid" d="M2 15H8V13H17L22 7V13L18 18H13V23H2Z"/><path d="M2 12L5 7H9L12 1H22L19 7H16L13 11H7Z" fill="#fff" stroke="#1fae54" stroke-width="1.500"/></svg></button>
      <button type="button" aria-label="More"><i class="caret m-0"></i></button>
      <button type="button" aria-label="Delete"><svg width="14" height="14"><path d="M1 1L13 13M13 1L1 13" stroke="#777" stroke-width="3"/></svg></button>
      <button type="button" aria-label="Settings"><svg width="24" height="24" viewBox="-12 -12 24 24" fill="none" stroke="#5c5c5c" stroke-width="1.500"><path id="gear"/><circle r="4"/></svg></button>
    </div>
  </div>
  <label class="opt"><input type="checkbox">Tabs</label>
  <label class="opt"><input type="checkbox">Rest Machining</label>
  <label class="opt last-opt"><input type="checkbox">Stock Contours</label>
  <div class="dlg-foot d-flex align-items-center"><svg width="21" height="21" class="me-auto"><circle cx="10.500" cy="10.500" r="10.500" fill="#8c8c8c"/><circle cx="10.500" cy="5.500" r="1.800" fill="#fff"/><path d="M8 9H12V15H13V17H8V15H9V11H8Z" fill="#fff"/></svg><button type="button" class="ok-btn">OK</button><button type="button" class="cancel-btn">Cancel</button></div>
</form>

<script src="https://cdn.jsdelivr.net/npm/bootstrap@5.3.0/dist/js/bootstrap.bundle.min.js"></script>
<script>
// Grid lines: five minor cells to each major one, measured from the origin
const minor = [], major = [];
for (let i = -22; i < 160; i++) {
  const x = Math.floor(595.3 + i * 27.4) + .5;
  (i % 5 ? minor : major).push(`M${x} 210V4000`);
}
for (let j = -12; j < 140; j++) {
  const y = Math.floor(465.8 + j * 22.48) + .5;
  (j % 5 ? minor : major).push(`M0 ${y}H6000`);
}
gridMinor.setAttribute('d', minor.join(''));
gridMajor.setAttribute('d', major.join(''));
// Gear outline with ten teeth
let g = '';
for (let i = 0; i < 10; i++) [[-.17, 8], [-.13, 11], [.13, 11], [.17, 8]].forEach(([a, r]) => {
  const t = i * Math.PI / 5 + a;
  g += (g ? 'L' : 'M') + (r * Math.sin(t)).toFixed(2) + ' ' + (-r * Math.cos(t)).toFixed(2);
});
gear.setAttribute('d', g + 'Z');
</script>
</body>
</html>
